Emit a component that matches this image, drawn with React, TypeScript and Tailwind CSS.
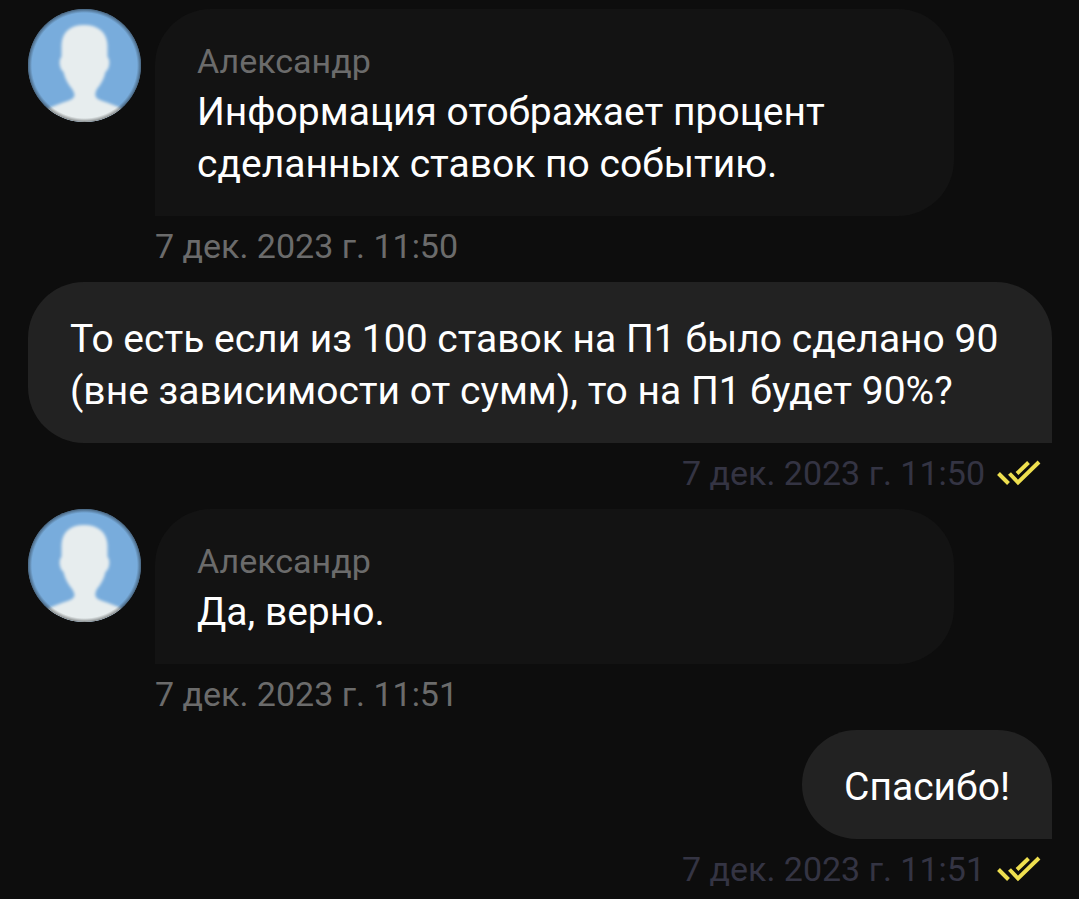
interface Message {
  id: number;
  author?: string;
  text: string;
  time: string;
}

const messages: Message[] = [
  {
    id: 1,
    author: "Александр",
    text: "Информация отображает процент сделанных ставок по событию.",
    time: "7 дек. 2023 г. 11:50",
  },
  {
    id: 2,
    text: "То есть если из 100 ставок на П1 было сделано 90 (вне зависимости от сумм), то на П1 будет 90%?",
    time: "7 дек. 2023 г. 11:50",
  },
  {
    id: 3,
    author: "Александр",
    text: "Да, верно.",
    time: "7 дек. 2023 г. 11:51",
  },
  {
    id: 4,
    text: "Спасибо!",
    time: "7 дек. 2023 г. 11:51",
  },
];

function Avatar() {
  return (
    <svg viewBox="0 0 113 113" className="w-[113px] h-[113px] shrink-0" aria-hidden="true">
      <defs>
        <clipPath id="avatar-clip">
          <circle cx="56.5" cy="56.5" r="56.5" />
        </clipPath>
        <filter id="avatar-soft" x="-10%" y="-10%" width="120%" height="120%">
          <feGaussianBlur stdDeviation="1.8" />
        </filter>
        <radialGradient id="avatar-edge">
          <stop offset="0.93" stopColor="#0d0d0d" stopOpacity="0" />
          <stop offset="1" stopColor="#0d0d0d" stopOpacity="0.45" />
        </radialGradient>
      </defs>
      <g clipPath="url(#avatar-clip)">
        <rect width="113" height="113" fill="#78acdc" />
        <path
          filter="url(#avatar-soft)"
          fill="#e7edee"
          d="M56 16C42 16 34 23 33.500 36L33.500 48C30.500 50 31 60 35.500 63C37 70 40 75 44 80C48 86 47 89 42 91C34 94 24 97 17 102L17 125L97 125L97 102C90 97 80 94 72 91C67 89 66 86 69 80C73 75 76 70 77.500 63C82 60 82.500 50 79.500 48L79.500 36C79 23 70 16 56 16Z"
        />
        <circle cx="56.5" cy="56.5" r="56.5" fill="url(#avatar-edge)" />
      </g>
    </svg>
  );
}

function ReadIcon() {
  return (
    <svg
      viewBox="0 0 44 26"
      className="w-11 h-[26px] shrink-0"
      fill="none"
      stroke="#eedf4f"
      strokeWidth="4"
      aria-hidden="true"
    >
      <path d="M1.500 13.500L11.500 23.500M12.500 13.500L21 22.500L42 2M20 13.500L31.500 2.500" />
    </svg>
  );
}

function IncomingMessage({ message }: { message: Message }) {
  return (
    <article className="flex gap-3.5">
      <Avatar />
      <div className="flex-1 min-w-0">
        <div className="mr-[98px] px-[42px] pt-[31px] pb-[26px] rounded-[56px] rounded-bl-none bg-[#131313]">
          <h2 className="mb-1 text-[34px] leading-[42px] text-[#6b6b6b]">{message.author}</h2>
          <p className="text-[39px] leading-[52px] text-white">{message.text}</p>
        </div>
        <div className="mt-2 mb-3.5 text-[34px] leading-[44px] text-[#6b6b6b]">
          <time>{message.time}</time>
        </div>
      </div>
    </article>
  );
}

function OutgoingMessage({ message }: { message: Message }) {
  return (
    <article className="flex flex-col items-end">
      <div className="px-[42px] pt-[31px] pb-[26px] rounded-[56px] rounded-br-none bg-[#222222]">
        <p className="text-[39px] leading-[52px] text-white">{message.text}</p>
      </div>
      <div className="flex items-center gap-3 mt-2 mb-3.5 pr-[11px] text-[34px] leading-[44px] text-[#343443]">
        <time>{message.time}</time>
        <ReadIcon />
      </div>
    </article>
  );
}

export default function App() {
  return (
    <main className="min-h-screen bg-[#0d0d0d] pl-7 pr-[27px] pt-[9px] font-['Roboto',sans-serif]">
      {messages.map((message) =>
        message.author ? (
          <IncomingMessage key={message.id} message={message} />
        ) : (
          <OutgoingMessage key={message.id} message={message} />
        )
      )}
    </main>
  );
}
